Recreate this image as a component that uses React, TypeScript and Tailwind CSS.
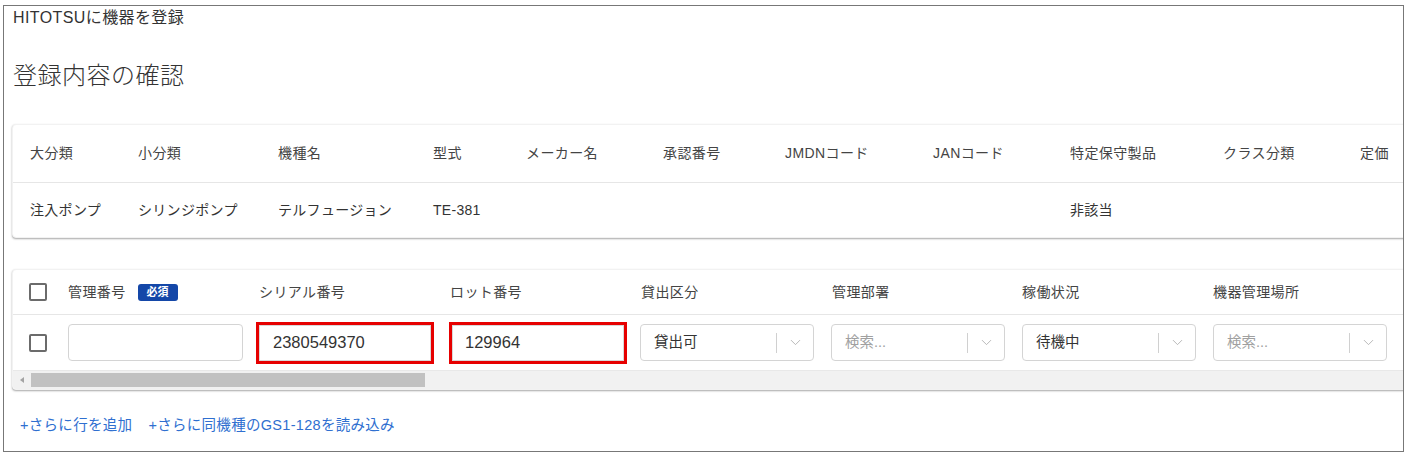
import { ChevronDown } from 'lucide-react'

const infoCols = [
  { label: '大分類', value: '注入ポンプ', w: 'w-[108px]' },
  { label: '小分類', value: 'シリンジポンプ', w: 'w-[140px]' },
  { label: '機種名', value: 'テルフュージョン', w: 'w-[155px]' },
  { label: '型式', value: 'TE-381', w: 'w-[93px]' },
  { label: 'メーカー名', value: '', w: 'w-[137px]' },
  { label: '承認番号', value: '', w: 'w-[122px]' },
  { label: 'JMDNコード', value: '', w: 'w-[148px]' },
  { label: 'JANコード', value: '', w: 'w-[137px]' },
  { label: '特定保守製品', value: '非該当', w: 'w-[153px]' },
  { label: 'クラス分類', value: '', w: 'w-[137px]' },
  { label: '定価', value: '', w: 'w-[100px]' },
]

const font = { fontFamily: '"Liberation Sans", "Noto Sans CJK JP", sans-serif' }

function Checkbox() {
  return <div className="w-[18px] h-[18px] border-2 border-[#6b6b6b] rounded-[2px] bg-white shrink-0" />
}

function Select({ value, placeholder }: { value?: string; placeholder?: string }) {
  return (
    <div className="w-[174px] h-[37px] border border-[#d4d4d4] rounded-[4px] bg-white flex items-center shrink-0">
      <span className={`flex-1 pl-[13px] text-[14.5px] ${value ? 'text-[#333]' : 'text-[#a0a0a0]'}`}>
        {value ?? placeholder}
      </span>
      <div className="w-px h-[20px] bg-[#d0d0d0]" />
      <div className="w-[36px] flex justify-center text-[#b0b0b0]">
        <ChevronDown size={17} strokeWidth={1.25} />
      </div>
    </div>
  )
}

export default function App() {
  return (
    <div className="w-[1411px] h-[454px] bg-white pt-[5px] pl-[3px]" style={font}>
      <div className="w-[1401px] h-[447px] border border-[#777] overflow-hidden pl-[8px]">
        {/* Title */}
        <div className="h-[24px] leading-[24px] text-[16px] tracking-[0.4px] text-[#333] pl-px">HITOTSUに機器を登録</div>
        <h1 className="mt-[30px] h-[32px] leading-[32px] text-[24px] tracking-[0.5px] font-light text-[#333] pl-px">登録内容の確認</h1>

        {/* Product info card */}
        <div className="mt-[32px] w-[1400px] bg-white rounded-[4px] border border-[#f2f2f2] shadow-[0_1px_2px_rgba(0,0,0,0.35)]">
          <div className="flex h-[58px] items-center pl-[17px] text-[14px] tracking-[0.4px] text-[#444] border-b border-[#e6e6e6]">
            {infoCols.map((c) => (
              <div key={c.label} className={`${c.w} shrink-0`}>{c.label}</div>
            ))}
          </div>
          <div className="flex h-[54px] items-center pl-[17px] text-[14px] tracking-[0.3px] text-[#333]">
            {infoCols.map((c) => (
              <div key={c.label} className={`${c.w} shrink-0`}>{c.value}</div>
            ))}
          </div>
        </div>

        {/* Registration rows card */}
        <div className="mt-[31px] w-[1400px] bg-white rounded-[4px] border border-[#f2f2f2] shadow-[0_1px_2px_rgba(0,0,0,0.35)] overflow-hidden">
          <div className="flex h-[45px] items-center pl-[16px] text-[14px] tracking-[0.4px] text-[#444] border-b border-[#e6e6e6]">
            <Checkbox />
            <div className="w-[191px] shrink-0 ml-[21px] flex items-center gap-[12px]">
              管理番号
              <span className="bg-[#1447a8] text-white text-[11px] tracking-normal font-bold rounded-[3px] w-[40px] h-[17px] flex items-center justify-center">必須</span>
            </div>
            <div className="w-[191px] shrink-0">シリアル番号</div>
            <div className="w-[191px] shrink-0">ロット番号</div>
            <div className="w-[191px] shrink-0">貸出区分</div>
            <div className="w-[190px] shrink-0">管理部署</div>
            <div className="w-[191px] shrink-0">稼働状況</div>
            <div className="w-[191px] shrink-0">機器管理場所</div>
          </div>
          <div className="flex h-[55px] items-center pl-[16px]">
            <Checkbox />
            <div className="ml-[21px] w-[175px] h-[37px] border border-[#d4d4d4] rounded-[4px] shrink-0" />
            <div className="ml-[13px] w-[178px] h-[42px] border-[3px] border-[#e60000] shrink-0">
              <div className="h-full border border-[#d8d8d8] flex items-center pl-[13px] text-[16.5px] text-[#333]">2380549370</div>
            </div>
            <div className="ml-[15px] w-[178px] h-[42px] border-[3px] border-[#e60000] shrink-0">
              <div className="h-full border border-[#d8d8d8] flex items-center pl-[12px] text-[16.5px] text-[#333]">129964</div>
            </div>
            <div className="ml-[13px]"><Select value="貸出可" /></div>
            <div className="ml-[17px]"><Select placeholder="検索..." /></div>
            <div className="ml-[17px]"><Select value="待機中" /></div>
            <div className="ml-[17px]"><Select placeholder="検索..." /></div>
          </div>
          {/* Horizontal scrollbar */}
          <div className="h-[19px] bg-[#f1f1f1] flex items-center border-t border-[#e8e8e8]">
            <div className="w-[18px] flex justify-center">
              <div className="w-0 h-0 border-y-[3px] border-y-transparent border-r-[4px] border-r-[#a3a3a3]" />
            </div>
            <div className="w-[394px] h-[14px] bg-[#c1c1c1]" />
          </div>
        </div>

        {/* Links */}
        <div className="mt-[25px] flex gap-[16px] pl-[8px] text-[14.5px] tracking-[0.3px] text-[#2f6fd0]">
          <span>+さらに行を追加</span>
          <span>+さらに同機種のGS1-128を読み込み</span>
        </div>
      </div>
    </div>
  )
}
